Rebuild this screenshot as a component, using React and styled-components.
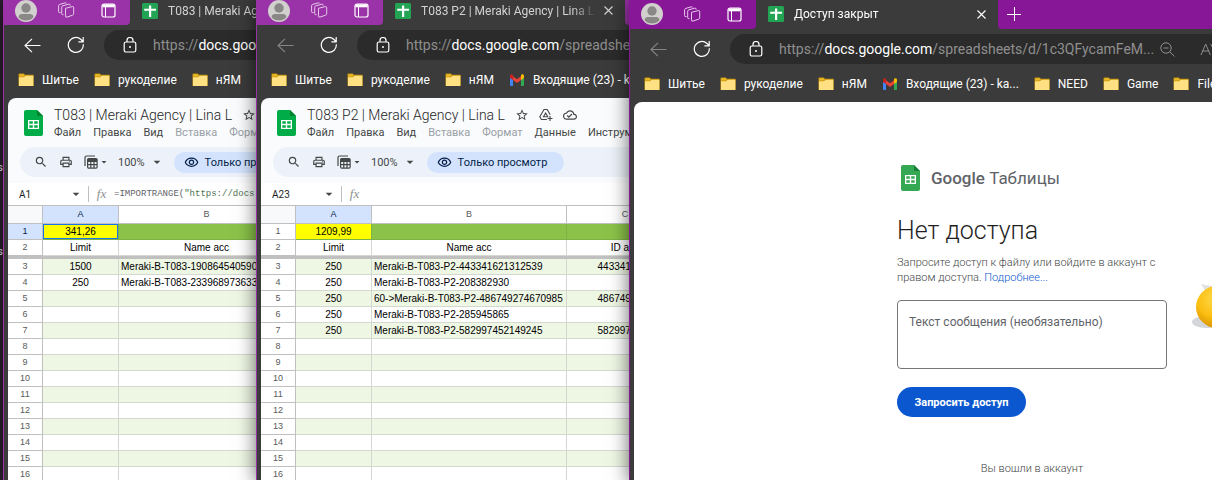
import React from "react";
import styled, { createGlobalStyle } from "styled-components";
import {
  MdArrowDropDown,
  MdOutlineCloudDone,
  MdOutlinePrint,
  MdOutlineVisibility,
  MdSearch,
  MdStarBorder,
} from "react-icons/md";

const uiFont = `Roboto, "Open Sans", sans-serif`;
const docFont = `Roboto, "Liberation Sans", sans-serif`;

const GlobalStyle = createGlobalStyle`
  * {
    box-sizing: border-box;
  }

  body {
    margin: 0;
    background: #2e2031;
    font-family: ${uiFont};
  }

  button {
    padding: 0;
    border: 0;
    background: none;
    color: inherit;
    font: inherit;
  }

  svg {
    display: block;
    flex-shrink: 0;
  }
`;

const Desktop = styled.main`
  display: grid;
  grid-template-columns: 3px 253fr 373fr 583fr;
  height: 100vh;
  overflow: hidden;
`;

const DesktopEdge = styled.div`
  display: flex;
  flex-direction: column;
  align-items: flex-end;
  gap: 68px;
  padding-top: 160px;
  overflow: hidden;
  color: #fff;
  font-size: 11px;
  line-height: 16px;
`;

/* ---------- browser window ---------- */

const Frame = styled.section`
  z-index: ${(props) => props.$level};
  display: flex;
  flex-direction: column;
  min-width: 0;
  border-left: 1px solid ${(props) => props.$accent};
  background: #3b3b3b;
  box-shadow: 0 0 18px rgba(0, 0, 0, 0.6);
`;

const FrameBody = styled.div`
  display: flex;
  flex-direction: column;
  flex: 1;
  min-height: 0;
  overflow: hidden;
`;

const TabStrip = styled.div`
  display: flex;
  flex-shrink: 0;
  height: ${(props) => (props.$tall ? "29px" : "25px")};
`;

const TabTools = styled.div`
  display: flex;
  flex-shrink: 0;
  align-items: center;
  width: 126px;
  padding: 0 0 ${(props) => (props.$tall ? "1px" : "4px")} 11px;
  border-bottom-right-radius: 4px;
  background: ${(props) => props.$accent};
  color: #fff;
`;

const ToolButton = styled.button`
  display: flex;
  flex-shrink: 0;
  align-items: center;
  justify-content: center;
  width: 42px;
  height: 22px;
`;

const AvatarButton = styled(ToolButton)`
  width: 22px;
  margin-right: 8px;
`;

const Tab = styled.div`
  display: flex;
  flex-shrink: 0;
  align-items: center;
  width: 242px;
  padding: 0 10px ${(props) => (props.$active ? "1px" : "4px")} 12px;
  color: ${(props) => (props.$active ? "#fff" : "#d2d2d2")};
  font-size: 12px;
`;

const TabTitle = styled.span`
  flex: 1;
  margin-left: 10px;
  overflow: hidden;
  white-space: nowrap;
  mask-image: linear-gradient(90deg, #000 86%, transparent);
`;

const CloseButton = styled.button`
  padding: 2px;
  margin-left: 6px;
`;

const TabRest = styled.div`
  display: flex;
  flex: 1;
  align-items: center;
  padding: 0 0 2px 9px;
  border-bottom-left-radius: 4px;
  background: ${(props) => props.$accent};
  color: #fff;
`;

const NavRow = styled.nav`
  display: flex;
  flex-shrink: 0;
  align-items: center;
  height: 40px;
  padding-left: 6px;
  color: #fff;
`;

const NavButton = styled(ToolButton)`
  width: 44px;
  color: ${(props) => (props.$faded ? "#858585" : "#fff")};
`;

const AddressBar = styled.div`
  display: flex;
  flex: 1;
  align-items: center;
  height: 30px;
  margin-left: 6px;
  padding-left: 19px;
  border-radius: 15px 0 0 15px;
  background: #2b2b2b;
  color: #8f8f8f;
  font-size: 14px;
  white-space: nowrap;
`;

const Url = styled.span`
  width: 376px;
  flex-shrink: 0;
  margin-left: 16px;
`;

const UrlHost = styled.span`
  color: #fff;
`;

const AddressAction = styled.button`
  flex-shrink: 0;
  width: 40px;
  margin-left: ${(props) => (props.$first ? "5px" : "0")};
  text-align: left;
`;

const Bookmarks = styled.div`
  display: flex;
  flex-shrink: 0;
  gap: 15px;
  height: 33px;
  padding: 7px 0 0 14px;
`;

const Bookmark = styled.a`
  display: flex;
  flex-shrink: 0;
  gap: 8px;
  height: 16px;
  align-items: center;
  color: #fff;
  font-size: 12px;
  text-decoration: none;
  white-space: nowrap;
`;

const Page = styled.div`
  flex: 1;
  min-height: 0;
  margin-left: 4px;
  overflow: hidden;
  border-top-left-radius: 8px;
  background: ${(props) => props.$background};
  font-family: ${docFont};
`;

/* ---------- spreadsheet ---------- */

const DocHeader = styled.header`
  display: flex;
  gap: 11px;
  height: 49px;
  padding: 7px 0 0 16px;
`;

const LogoSlot = styled.div`
  padding-top: 5px;
`;

const DocInfo = styled.div`
  padding-top: 1px;
`;

const DocTitleRow = styled.div`
  display: flex;
  align-items: center;
  gap: 10px;
  height: 17px;
  color: #444746;
`;

const DocTitle = styled.h1`
  margin: 0;
  color: #1f1f1f;
  font-size: 14px;
  font-weight: 300;
  white-space: nowrap;
`;

const Menu = styled.div`
  display: flex;
  gap: 12px;
  margin-top: 1px;
  font-size: 11px;
  line-height: 18px;
`;

const MenuButton = styled.button`
  color: ${(props) => (props.disabled ? "#9aa0a6" : "#444746")};
  white-space: nowrap;
`;

const Toolbar = styled.div`
  display: flex;
  align-items: center;
  height: 30px;
  margin-left: 12px;
  padding-left: 14px;
  border-radius: 15px 0 0 15px;
  background: #edf2fa;
  color: #444746;
  font-size: 11px;
`;

const ToolbarButton = styled.button`
  display: flex;
  flex-shrink: 0;
  align-items: center;
  margin-right: 11px;
`;

const FilterButton = styled(ToolbarButton)`
  margin-right: 8px;
`;

const ZoomButton = styled(ToolbarButton)`
  gap: 4px;
  margin-right: 9px;
`;

const ViewChip = styled.button`
  display: flex;
  flex-shrink: 0;
  align-items: center;
  gap: 6px;
  width: 137px;
  height: 21px;
  padding-left: 10px;
  border-radius: 11px;
  background: #d3e3fd;
  color: #041e49;
  white-space: nowrap;
`;

const FormulaBar = styled.div`
  display: flex;
  align-items: center;
  height: 23px;
  margin-top: 6px;
  border-bottom: 1px solid #c0c0c0;
  background: #fff;
  color: #444746;
`;

const NameBox = styled.input`
  width: 60px;
  padding: 0 0 0 11px;
  border: 0;
  background: none;
  color: #1f1f1f;
  font: 10px ${docFont};
  outline: 0;
`;

const FxLabel = styled.span`
  flex-shrink: 0;
  width: 26px;
  height: 16px;
  margin-left: 4px;
  border-left: 1px solid #c0c0c0;
  color: #8f8f8f;
  font: italic 13px/16px "Liberation Serif", serif;
  text-align: center;
`;

const Formula = styled.code`
  color: #5f6368;
  font: 9px "Liberation Mono", monospace;
  white-space: nowrap;
`;

const FormulaString = styled.span`
  color: #4d7350;
`;

const Grid = styled.table`
  width: ${(props) => props.$width}px;
  border-collapse: separate;
  border-spacing: 0;
  table-layout: fixed;
  background: #fff;
  color: #000;
  font: 10px/15px "Liberation Sans", Arial, sans-serif;
`;

const HeadCell = styled.th`
  height: ${(props) => (props.scope === "col" ? "18px" : "16px")};
  padding: 0;
  border-right: 1px solid #c0c0c0;
  border-bottom: 1px solid #c0c0c0;
  background: ${(props) => (props.$selected ? "#d3e3fd" : "#fff")};
  color: ${(props) => (props.$selected ? "#041e49" : "#575a5a")};
  font-size: 9px;
  font-weight: 400;
`;

const CornerCell = styled.td`
  height: 18px;
  border-right: 1px solid #c0c0c0;
  border-bottom: 1px solid #c0c0c0;
  background: #f8f9fa;
`;

const rowColors = { green: "#8bc34a", band: "#eef6e4", plain: "#fff" };

const Cell = styled.td`
  height: 16px;
  padding: 0 2px;
  overflow: hidden;
  border-right: 1px solid ${(props) => (props.$tone === "green" ? "#7fb244" : "#d5d8d0")};
  border-bottom: 1px solid ${(props) => (props.$tone === "green" ? "#7fb244" : "#d5d8d0")};
  background: ${(props) => (props.$yellow ? "#ffff00" : rowColors[props.$tone])};
  text-align: ${(props) => props.$align};
  white-space: nowrap;
  ${(props) => props.$outlined && "box-shadow: inset 0 0 0 1px #1a73e8;"}
`;

const FreezeBar = styled.td`
  height: 3px;
  padding: 0;
  background: #c0c0c0;
`;

/* ---------- access page ---------- */

const AccessLayout = styled.div`
  display: flex;
  gap: 25px;
  padding: 62px 0 0 263px;
`;

const AccessForm = styled.form`
  flex-shrink: 0;
  width: 270px;
  color: #5f6368;
  font-size: 11px;
`;

const Brand = styled.div`
  display: flex;
  align-items: center;
  gap: 11px;
  height: 28px;
  padding-left: 4px;
  font-size: 17px;
`;

const BrandName = styled.span`
  font-weight: 500;
`;

const Title = styled.h1`
  margin: 23px 0 8px;
  color: #1f1f1f;
  font-size: 25px;
  font-weight: 300;
  line-height: 32px;
`;

const Description = styled.p`
  margin: 0;
  color: #444746;
  font-weight: 300;
  line-height: 15px;
  white-space: nowrap;
`;

const MoreLink = styled.a`
  color: #0b57d0;
  text-decoration: none;
`;

const Message = styled.textarea`
  display: block;
  width: 100%;
  height: 69px;
  margin: 15px 0 18px;
  padding: 13px 11px;
  border: 1px solid #747775;
  border-radius: 4px;
  background: #fff;
  font: 12px/16px ${docFont};
  resize: none;

  &::placeholder {
    color: #5f6368;
    opacity: 1;
  }
`;

const RequestButton = styled.button`
  width: 129px;
  height: 30px;
  border-radius: 15px;
  background: #0b57d0;
  color: #fff;
  font-weight: 700;
`;

const SignedIn = styled.p`
  margin: 44px 0 0;
  color: #444746;
  font-weight: 300;
  line-height: 16px;
  text-align: center;
`;

const ArtBox = styled.div`
  padding-top: 120px;
`;

/* ---------- drawings ---------- */

const Avatar = () => (
  <svg width="22" height="22" viewBox="0 0 22 22">
    <circle cx="11" cy="11" r="11" fill="#d2d0ce" />
    <circle cx="11" cy="8" r="4.7" fill="#8a8886" />
    <path d="M3.6 17.2c0-2 1.5-3.2 3.4-3.2h8c1.900 0 3.400 1.200 3.400 3.200a10 10 0 0 1-14.800 0z" fill="#8a8886" />
  </svg>
);

const WorkspacesIcon = () => (
  <svg width="17" height="17" viewBox="0 0 17 17" fill="none" stroke="#e6c9ea" strokeWidth="1">
    <path d="M7.500 6.300l6.700-1.700a1.200 1.200 0 0 1 1.500 1.200v6a1.500 1.500 0 0 1-1.100 1.400l-5.600 1.900a1.200 1.200 0 0 1-1.500-1.200z" />
    <path d="M5.500 12.600l-.6.100a1 1 0 0 1-1.200-1V5.200a1.500 1.500 0 0 1 1.100-1.400l6-1.600a1 1 0 0 1 1.300.9v.6" />
    <path d="M2.600 10.500l-.8.100a1 1 0 0 1-1.200-1V3.800a1.500 1.500 0 0 1 1.100-1.400L7.500.8a1 1 0 0 1 1.200.6" />
  </svg>
);

const TabActionsIcon = () => (
  <svg width="15" height="15" viewBox="0 0 15 15" fill="none" stroke="currentColor">
    <rect x="1" y="1" width="13" height="13" rx="2" strokeWidth="1.200" />
    <path d="M1.500 2.800h12" strokeWidth="3" />
    <path d="M4.500 4v10" />
  </svg>
);

const Favicon = () => (
  <svg width="16" height="16" viewBox="0 0 16 16">
    <rect width="16" height="16" rx="1.500" fill="#23a455" />
    <path d="M7 2.500h2.200v3.300H14v2H9.200V14H7V7.800H2.200v-2H7z" fill="#fff" />
  </svg>
);

const CloseIcon = () => (
  <svg width="9" height="9" viewBox="0 0 9 9" stroke="currentColor" strokeWidth="1.100">
    <path d="M.5.500l8 8M8.500.500l-8 8" />
  </svg>
);

const PlusIcon = () => (
  <svg width="14" height="14" viewBox="0 0 14 14" stroke="currentColor">
    <path d="M7.500 0v14M0 7.500h14" />
  </svg>
);

const BackIcon = () => (
  <svg width="17" height="15" viewBox="0 0 17 15" fill="none" stroke="currentColor" strokeWidth="1.100">
    <path d="M16.500 7.500H1M8 .8L1 7.500l7 6.700" />
  </svg>
);

const ReloadIcon = () => (
  <svg width="18" height="18" viewBox="0 0 18 18" fill="none" stroke="currentColor" strokeWidth="1.200">
    <path d="M16.300 8.200a7.500 7.500 0 1 1-2.300-4.700l2 2M16.200 1v4.800h-4.800" />
  </svg>
);

const LockIcon = () => (
  <svg width="14" height="16" viewBox="0 0 14 16" fill="none" stroke="#fff" strokeWidth="1.200">
    <rect x="1.200" y="5" width="11.600" height="10" rx="1.800" />
    <path d="M4 5V3.500a3 3 0 0 1 6 0V5" />
    <circle cx="7" cy="10" r="1" fill="#fff" stroke="none" />
  </svg>
);

const ZoomOutIcon = () => (
  <svg width="15" height="15" viewBox="0 0 15 15" fill="none" stroke="currentColor">
    <circle cx="6" cy="6" r="5.200" />
    <path d="M3.500 6h5M9.800 9.800l4.700 4.700" />
  </svg>
);

const ReadAloudIcon = () => (
  <svg width="18" height="16" viewBox="0 0 18 16" fill="none" stroke="currentColor">
    <path d="M1 14L5.700 3l4.700 11M2.600 10h6.200M10.500 3q1.500 1 1.500 3M12.500 1q2.500 2 2.500 5" />
  </svg>
);

const FolderIcon = () => (
  <svg width="16" height="14" viewBox="0 0 16 14">
    <path d="M.5 1.500a1 1 0 0 1 1-1h4.200l1.300 1.300h8a.7.7 0 0 1 .7.700v10.500H.5z" fill="#c8960c" />
    <path d="M1 4.300h5L7.700 2.700H15.300V13H1z" fill="#ffe083" />
    <path d="M1.300 1.300h4.200l1 1-1 1.200H1.300z" fill="#e9b928" />
  </svg>
);

const GmailIcon = () => (
  <svg width="16" height="12" viewBox="0 0 16 12">
    <path d="M1 3h3v9H2a1 1 0 0 1-1-1z" fill="#4285f4" />
    <path d="M12 3h3v8a1 1 0 0 1-1 1h-2z" fill="#34a853" />
    <path d="M4 2.200l4 3 4-3v3.900l-4 3-4-3z" fill="#ea4335" />
    <path d="M1 1.800C1 .300 2.600-.300 3.700.700L4 1v5.100L1 3.900z" fill="#c5221f" />
    <path d="M15 1.800C15 .300 13.400-.300 12.300.700L12 1v5.100l3-2.200z" fill="#fbbc04" />
  </svg>
);

const SheetsLogo = ({ color, fold, label }) => (
  <svg width="19" height="26" viewBox="0 0 19 26" role="img" aria-label={label}>
    <path d="M2 0h11l6 6v18a2 2 0 0 1-2 2H2a2 2 0 0 1-2-2V2a2 2 0 0 1 2-2z" fill={color} />
    <path d="M13 0l6 6h-6z" fill={fold} />
    <path d="M4 10h11v9H4zm1.300 1.300v2.500h3.500v-2.500zm4.900 0v2.500h3.500v-2.500zm-4.900 3.900v2.500h3.500v-2.500zm4.900 0v2.500h3.500v-2.500z" fill="#fff" fillRule="evenodd" />
  </svg>
);

const DriveIcon = () => (
  <svg width="14" height="14" viewBox="0 0 14 14" fill="none" stroke="currentColor" strokeWidth="1.100">
    <path d="M8 11.500H2.400L.8 8.700 5 1.500h3.200l3 5.200M6.600 5L4.500 8.700h4.300zM11 8v5M8.500 10.500h5" />
  </svg>
);

const FilterViewIcon = () => (
  <svg width="14" height="14" viewBox="0 0 14 14" fill="none" stroke="currentColor" strokeWidth="1.200">
    <path d="M1 11V2.500A1.500 1.500 0 0 1 2.500 1H11" />
    <rect x="3.600" y="3.600" width="9.500" height="9.500" rx="1" />
    <path d="M3.600 6.300h9.500M3.600 9.600h9.500M6.800 6.300v6.800M10 6.300v6.800" />
    <path d="M4 5h9" strokeWidth="2" />
  </svg>
);

const Art = () => (
  <svg width="42" height="50" viewBox="0 0 42 50">
    <defs>
      <radialGradient id="ball" cx="45%" cy="30%" r="70%">
        <stop offset="0" stopColor="#ffd84a" />
        <stop offset="0.600" stopColor="#fbbf12" />
        <stop offset="1" stopColor="#d99500" />
      </radialGradient>
    </defs>
    <ellipse cx="14" cy="38" rx="14" ry="6" fill="#d4d6d9" />
    <path d="M9 0l14 3-7 8z" fill="#dfe1e3" />
    <circle cx="25" cy="23" r="21" fill="url(#ball)" />
  </svg>
);

/* ---------- composition ---------- */

const bookmarks = [
  { label: "Шитье" },
  { label: "рукоделие" },
  { label: "нЯМ" },
  { label: "Входящие (23) - ka...", mail: true },
  { label: "NEED" },
  { label: "Game" },
  { label: "Files" },
];

function BrowserWindow({ title, accent, level, active, canGoBack, background, children }) {
  return (
    <Frame $accent={accent} $level={level}>
      <FrameBody>
        <TabStrip $tall={active}>
          <TabTools $accent={accent} $tall={active}>
            <AvatarButton aria-label="Профиль"><Avatar /></AvatarButton>
            <ToolButton aria-label="Рабочие области"><WorkspacesIcon /></ToolButton>
            <ToolButton aria-label="Вкладки"><TabActionsIcon /></ToolButton>
          </TabTools>
          <Tab $active={active}>
            <Favicon />
            <TabTitle>{title}</TabTitle>
            <CloseButton aria-label="Закрыть"><CloseIcon /></CloseButton>
          </Tab>
          <TabRest $accent={accent}>
            <button aria-label="Новая вкладка"><PlusIcon /></button>
          </TabRest>
        </TabStrip>
        <NavRow>
          <NavButton aria-label="Назад" $faded={!canGoBack}><BackIcon /></NavButton>
          <NavButton aria-label="Обновить"><ReloadIcon /></NavButton>
          <AddressBar>
            <LockIcon />
            <Url>
              https://<UrlHost>docs.google.com</UrlHost>/spreadsheets/d/1c3QFycamFeM...
            </Url>
            <AddressAction $first aria-label="Масштаб"><ZoomOutIcon /></AddressAction>
            <AddressAction aria-label="Прочесть вслух"><ReadAloudIcon /></AddressAction>
          </AddressBar>
        </NavRow>
        <Bookmarks>
          {bookmarks.map(({ label, mail }) => (
            <Bookmark href="#" key={label}>
              {mail ? <GmailIcon /> : <FolderIcon />}
              {label}
            </Bookmark>
          ))}
        </Bookmarks>
        <Page $background={background}>{children}</Page>
      </FrameBody>
    </Frame>
  );
}

const menuItems = ["Файл", "Правка", "Вид", "Вставка", "Формат", "Данные", "Инструменты"];
const disabledItems = ["Вставка", "Формат"];

function Spreadsheet({ title, cell, formula, columns, rows, selectedRow }) {
  const total = columns.reduce((sum, column) => sum + column.width, 35);
  const rowNumbers = Array.from({ length: 16 }, (_, i) => i + 1);
  const tone = (n) => (n === 1 ? "green" : n > 2 && n % 2 === 1 ? "band" : "plain");

  return (
    <>
      <DocHeader>
        <LogoSlot>
          <SheetsLogo color="#00ac47" fold="#00832d" label="Таблицы" />
        </LogoSlot>
        <DocInfo>
          <DocTitleRow>
            <DocTitle>{title}</DocTitle>
            <MdStarBorder size={14} />
            <DriveIcon />
            <MdOutlineCloudDone size={14} />
          </DocTitleRow>
          <Menu>
            {menuItems.map((item) => (
              <MenuButton key={item} disabled={disabledItems.includes(item)}>{item}</MenuButton>
            ))}
          </Menu>
        </DocInfo>
      </DocHeader>
      <Toolbar>
        <ToolbarButton aria-label="Поиск"><MdSearch size={14} /></ToolbarButton>
        <ToolbarButton aria-label="Печать"><MdOutlinePrint size={14} /></ToolbarButton>
        <FilterButton aria-label="Фильтры">
          <FilterViewIcon />
          <MdArrowDropDown size={12} />
        </FilterButton>
        <ZoomButton>
          100%
          <MdArrowDropDown size={16} />
        </ZoomButton>
        <ViewChip>
          <MdOutlineVisibility size={15} />
          Только просмотр
        </ViewChip>
      </Toolbar>
      <FormulaBar>
        <NameBox aria-label="Ячейка" defaultValue={cell} />
        <MdArrowDropDown size={16} />
        <FxLabel>fx</FxLabel>
        {formula && (
          <Formula>
            {formula}
            <FormulaString>"https://docs.google.com"</FormulaString>
          </Formula>
        )}
      </FormulaBar>
      <Grid $width={total}>
        <colgroup>
          <col width={35} />
          {columns.map(({ name, width }) => (
            <col key={name} width={width} />
          ))}
        </colgroup>
        <thead>
          <tr>
            <CornerCell />
            {columns.map(({ name }) => (
              <HeadCell scope="col" key={name} $selected={name === "A"}>{name}</HeadCell>
            ))}
          </tr>
        </thead>
        <tbody>
          {rowNumbers.map((n) => (
            <React.Fragment key={n}>
              <tr>
                <HeadCell scope="row" $selected={n === selectedRow}>{n}</HeadCell>
                {columns.map(({ name, align }, i) => (
                  <Cell
                    key={name}
                    $tone={tone(n)}
                    $yellow={n === 1 && i === 0}
                    $outlined={n === selectedRow && i === 0}
                    $align={n < 3 ? "center" : align}
                  >
                    {rows[n - 1]?.[i]}
                  </Cell>
                ))}
              </tr>
              {n === 2 && (
                <tr>
                  <FreezeBar colSpan={columns.length + 1} />
                </tr>
              )}
            </React.Fragment>
          ))}
        </tbody>
      </Grid>
    </>
  );
}

const firstRows = [
  ["341,26"],
  ["Limit", "Name acc"],
  ["1500", "Meraki-B-T083-190864540590"],
  ["250", "Meraki-B-T083-233968973633"],
];

const secondRows = [
  ["1209,99"],
  ["Limit", "Name acc", "ID acc"],
  ["250", "Meraki-B-T083-P2-443341621312539", "443341621312539"],
  ["250", "Meraki-B-T083-P2-208382930"],
  ["250", "60->Meraki-B-T083-P2-486749274670985", "486749274670985"],
  ["250", "Meraki-B-T083-P2-285945865"],
  ["250", "Meraki-B-T083-P2-582997452149245", "582997452149245"],
];

function AccessRequest() {
  return (
    <AccessLayout>
      <AccessForm onSubmit={(event) => event.preventDefault()}>
        <Brand>
          <SheetsLogo color="#34a853" fold="#188038" label="Таблицы" />
          <span>
            <BrandName>Google</BrandName> Таблицы
          </span>
        </Brand>
        <Title>Нет доступа</Title>
        <Description>
          Запросите доступ к файлу или войдите в аккаунт с<br />
          правом доступа. <MoreLink href="#">Подробнее...</MoreLink>
        </Description>
        <Message aria-label="Текст сообщения" placeholder="Текст сообщения (необязательно)" />
        <RequestButton type="submit">Запросить доступ</RequestButton>
        <SignedIn>Вы вошли в аккаунт</SignedIn>
      </AccessForm>
      <ArtBox>
        <Art />
      </ArtBox>
    </AccessLayout>
  );
}

function App() {
  return (
    <>
      <GlobalStyle />
      <Desktop>
        <DesktopEdge>
          <span>s</span>
          <span>s</span>
        </DesktopEdge>
        <BrowserWindow title="T083 | Meraki Agency | Lina L" accent="#9a33a7" level={1} canGoBack background="#f9fbfd">
          <Spreadsheet
            title="T083 | Meraki Agency | Lina L"
            cell="A1"
            formula="=IMPORTRANGE("
            columns={[
              { name: "A", width: 76, align: "center" },
              { name: "B", width: 176, align: "left" },
            ]}
            rows={firstRows}
            selectedRow={1}
          />
        </BrowserWindow>
        <BrowserWindow title="T083 P2 | Meraki Agency | Lina L" accent="#9a33a7" level={2} background="#f9fbfd">
          <Spreadsheet
            title="T083 P2 | Meraki Agency | Lina L"
            cell="A23"
            columns={[
              { name: "A", width: 76, align: "center" },
              { name: "B", width: 195, align: "left" },
              { name: "C", width: 117, align: "right" },
            ]}
            rows={secondRows}
          />
        </BrowserWindow>
        <BrowserWindow title="Доступ закрыт" accent="#881798" level={3} active background="#fff">
          <AccessRequest />
        </BrowserWindow>
      </Desktop>
    </>
  );
}

export default App;
